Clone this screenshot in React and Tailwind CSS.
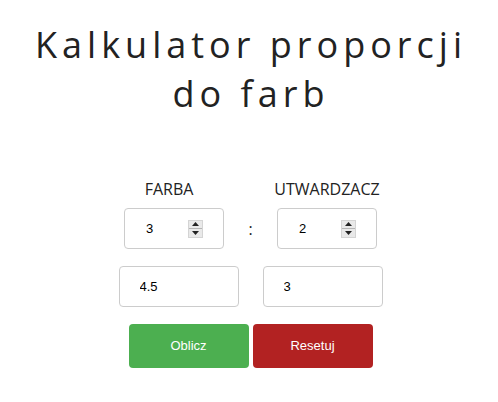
import React from "react";

function Spinner() {
  return (
    <div className="flex h-[18px] w-[15px] flex-col border border-[#d4d4d4] bg-[#e9e9e9]">
      <div className="flex flex-1 items-center justify-center border-b border-[#b5b5b5]">
        <svg width="7" height="4" viewBox="0 0 7 4"><path d="M3.5 0L7 4H0z" fill="#222" /></svg>
      </div>
      <div className="flex flex-1 items-center justify-center">
        <svg width="7" height="4" viewBox="0 0 7 4"><path d="M0 0h7L3.5 4z" fill="#222" /></svg>
      </div>
    </div>
  );
}

function NumBox({ value }) {
  return (
    <div className="flex h-[41px] w-[100px] items-center rounded-[4px] border border-[#cccccc] bg-white pl-[21px] pr-[20px]">
      <input
        type="text"
        defaultValue={value}
        className="w-0 flex-1 bg-transparent text-[13px] text-black outline-none"
        style={{ fontFamily: '"Liberation Sans", Arial, sans-serif' }}
      />
      <Spinner />
    </div>
  );
}

function ResBox({ value }) {
  return (
    <input
      type="text"
      readOnly
      defaultValue={value}
      className="h-[41px] w-[120px] rounded-[4px] border border-[#cccccc] bg-white pl-[20px] text-[13px] text-black outline-none"
      style={{ fontFamily: '"Liberation Sans", Arial, sans-serif' }}
    />
  );
}

export default function App() {
  return (
    <div className="min-h-[402px] w-full bg-white">
      <h1
        className="pl-[4px] pt-[20px] text-center text-[36px] font-normal leading-[49px] tracking-[5px] text-[#222222]"
        style={{ fontFamily: '"Open Sans", sans-serif' }}
      >
        Kalkulator proporcji
        <br />
        do farb
      </h1>

      <div className="mt-[60px] flex flex-col items-center pl-[3px]">
        <div className="flex" style={{ fontFamily: '"Open Sans", sans-serif' }}>
          <div className="flex w-[100px] justify-center pr-[10px] text-[16px] leading-[22px] text-[#222222]">FARBA</div>
          <div className="w-[53px]" />
          <div className="flex w-[100px] justify-center text-[16px] leading-[22px] text-[#222222]">UTWARDZACZ</div>
        </div>

        <div className="mt-[8px] flex items-center">
          <NumBox value="3" />
          <div
            className="flex w-[53px] justify-center text-[16px] text-[#222222]"
            style={{ fontFamily: '"Open Sans", sans-serif' }}
          >
            :
          </div>
          <NumBox value="2" />
        </div>

        <div className="mt-[17px] flex gap-[24px]">
          <ResBox value="4.5" />
          <ResBox value="3" />
        </div>

        <div
          className="mt-[17px] flex gap-[4px]"
          style={{ fontFamily: '"Liberation Sans", Arial, sans-serif' }}
        >
          <button className="h-[44px] w-[120px] rounded-[4px] bg-[#4caf50] text-[13px] text-white">Oblicz</button>
          <button className="h-[44px] w-[120px] rounded-[4px] bg-[#b22222] text-[13px] text-white">Resetuj</button>
        </div>
      </div>
    </div>
  );
}
